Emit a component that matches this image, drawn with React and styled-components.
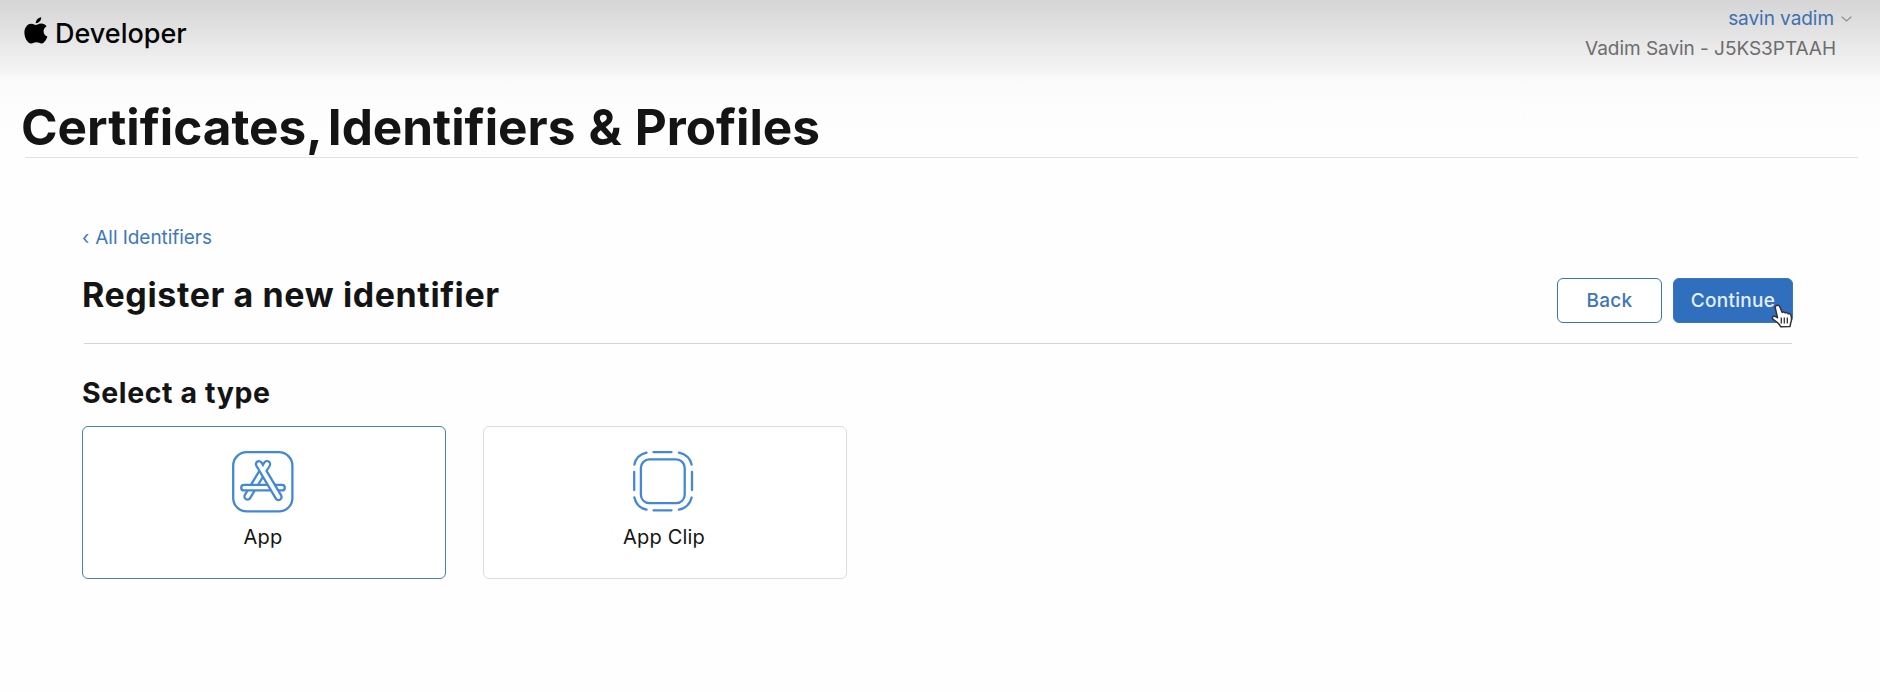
import React from "react";
import styled, { createGlobalStyle } from "styled-components";

const GlobalStyle = createGlobalStyle`
  * { box-sizing: border-box; }
  body { margin: 0; background: #fefefe; font-family: Inter, "Liberation Sans", sans-serif; color: #141414; }
  h1, h2, h3 { margin: 0; font-weight: 700; white-space: nowrap; }
  svg { display: block; flex: none; }
`;

const Page = styled.div`
  min-height: 692px;
  background: linear-gradient(
    #d4d4d6 0, #dadadb 12px, #e0e0e1 26px, #e9e9e9 45px, #f1f1f1 66px,
    #f4f4f4 72px, #fafafa 77px, #fdfdfd 105px, #fefefe 150px
  );
`;

const Header = styled.header`
  display: flex;
  justify-content: space-between;
  height: 75px;
  padding: 0 28px 0 24px;
`;

const Brand = styled.a`
  display: flex;
  align-items: flex-start;
  gap: 7px;
  padding-top: 16px;
  color: #050505;
  font-size: 27px;
  font-weight: 500;
  line-height: 35px;
`;

const Account = styled.div`
  display: flex;
  flex-direction: column;
  align-items: flex-end;
  gap: 6px;
  padding-top: 7px;
  font-size: 19px;
  line-height: 24px;
`;

const AccountName = styled.a`
  display: flex;
  align-items: center;
  gap: 7px;
  color: #3e70ae;
  letter-spacing: -0.05px;
`;

const Team = styled.span`
  margin-right: 16px;
  color: #6d6d6e;
  letter-spacing: -0.04px;
`;

const TitleBar = styled.div`
  margin: 0 22px 0 25px;
  padding-top: 22px;
  border-bottom: 1px solid #e2e2e2;
`;

const PageTitle = styled.h1`
  margin-left: -4px;
  font-size: 49.5px;
  line-height: 60px;
  letter-spacing: -0.02px;
  word-spacing: 1.3px;
`;

const LeadWord = styled.span`
  margin-right: -8px;
`;

const Content = styled.main`
  padding: 68px 87px 0 82px;
`;

const Breadcrumb = styled.a`
  display: flex;
  gap: 6px;
  color: #4078bd;
  font-size: 19px;
  line-height: 24px;
  letter-spacing: -0.05px;
`;

const SectionHead = styled.div`
  display: flex;
  justify-content: space-between;
  align-items: flex-start;
  height: 68px;
  margin-top: 25px;
`;

const SectionTitle = styled.h2`
  font-size: 34px;
  line-height: 40px;
  letter-spacing: 0.6px;
`;

const Actions = styled.div`
  display: flex;
  gap: 11px;
  padding-top: 3px;
`;

const Button = styled.button`
  width: ${(p) => (p.$primary ? 120 : 105)}px;
  height: 45px;
  padding: 0;
  border: 1px solid #3a76b8;
  border-radius: 6px;
  background: ${(p) => (p.$primary ? "#2f6fbd" : "#fff")};
  color: ${(p) => (p.$primary ? "#e3f0fc" : "#3c75b8")};
  font: 450 19px Inter, sans-serif;
  letter-spacing: 0.3px;
`;

const PrimarySlot = styled.div`
  position: relative;
`;

const Pointer = styled.svg`
  position: absolute;
  left: 96px;
  top: 25px;
`;

const Divider = styled.div`
  height: 1px;
  margin: 0 1px 0 2px;
  background: #d4d4d4;
`;

const GroupTitle = styled.h3`
  margin: 32px 0 16px;
  font-size: 28.5px;
  line-height: 34px;
  letter-spacing: 0.6px;
`;

const Cards = styled.div`
  display: flex;
  gap: 37px;
`;

const Card = styled.div`
  display: flex;
  flex-direction: column;
  align-items: center;
  gap: 11px;
  width: 364px;
  height: 153px;
  padding: 24px 2px 0 0;
  border: 1px solid ${(p) => (p.$selected ? "#4a80b4" : "#dcdcdc")};
  border-radius: 6px;
  background: #fff;
  font-size: 20px;
  line-height: 26px;
  letter-spacing: 0.2px;
`;

const AppleLogo = () => (
  <svg width="24" height="28" viewBox="0 -1 24 28" fill="#000">
    <path d="M17.2.2c.2 2.900-2.300 5.900-5.400 6C11.500 3.400 14.200.6 17.200.2z" />
    <path d="M12 8c1.200 0 2.700-1.400 5.200-1.400 2.300 0 4.100 1 5.300 2.600-4.300 2.700-3.700 8.600.9 10.400-.9 2.600-2.900 6.800-5.700 6.900-2 0-2.900-1.200-5.300-1.200-2.300 0-3.300 1.200-5.200 1.200C3.400 26.500.4 20.900.4 15.600c0-5.500 3.400-8.900 6.900-8.900 2.100 0 3.600 1.300 4.700 1.300z" />
  </svg>
);

const Chevron = () => (
  <svg width="11" height="6" viewBox="0 0 11 6" fill="none" stroke="#8d9299" strokeWidth="1.300">
    <path d="M.6.700 5.500 5 10.400.7" />
  </svg>
);

const AppIcon = () => (
  <svg width="62" height="62" viewBox="0 0 62 62" fill="none" strokeLinecap="round">
    <rect x="1.200" y="1.200" width="59.200" height="59.200" rx="13.500" stroke="#4388d8" strokeWidth="2.300" />
    <path d="M35 13.200 15.500 45.500" stroke="#4388d8" strokeWidth="8.400" />
    <path d="M35 13.200 15.500 45.500" stroke="#fff" strokeWidth="3.800" />
    <path d="M12 36.700H50" stroke="#4388d8" strokeWidth="7.800" />
    <path d="M12 36.700H50" stroke="#fff" strokeWidth="3.200" />
    <path d="M27 13.200 46.500 46" stroke="#4388d8" strokeWidth="8.400" />
    <path d="M27 13.200 46.500 46" stroke="#fff" strokeWidth="3.800" />
    <path d="M35 13.200 31.500 19" stroke="#fff" strokeWidth="3.800" />
  </svg>
);

const ClipIcon = () => (
  <svg width="62" height="62" viewBox="1 0.5 62 62" fill="none" stroke="#4388d8" strokeWidth="2.300">
    <rect x="8.900" y="8.900" width="43.800" height="43.800" rx="8.500" />
    <path
      strokeLinecap="round"
      d="M21.500 1.700h18M21.500 59.800h18M2.200 21.500v18M60 21.500v18M14.500 2.200C8 3.700 3.700 8 2.400 14M47 2.200C53.500 3.700 58.200 8 59.600 14M14.500 59.200C8 57.700 3.700 53.300 2.400 47M47 59.200c6.500-1.500 11.200-5.900 12.600-12.200"
    />
  </svg>
);

const HandPointer = () => (
  <Pointer width="26" height="28" viewBox="0 0 26 28">
    <path
      d="M7.500 2.500C9 1.700 10.300 2.600 10.900 4l2.300 5.400c1-.8 2.300-.5 2.900.5 1-.7 2.400-.3 2.900.8 1.400-.5 2.600.2 3 1.600.9 3.300.6 5.600-.3 7.700l-.7 3.500-9.200.3c-1.600-2.800-3.600-4.700-6.300-6.400-1.600-1-2.500-2.300-1.900-3.500.8-1.200 2.800-.7 4.900.8L6.400 5.300c-.5-1.300-.1-2.300 1.100-2.800z"
      fill="#fff"
      stroke="#333"
      strokeWidth="1.500"
      strokeLinejoin="round"
    />
    <path d="M12.300 14.500v6M15.300 14.500v6M18.300 14.500v6" stroke="#333" strokeWidth="1.300" />
  </Pointer>
);

export default function App() {
  return (
    <Page>
      <GlobalStyle />
      <Header>
        <Brand>
          <AppleLogo />
          <span>Developer</span>
        </Brand>
        <Account>
          <AccountName>
            savin vadim
            <Chevron />
          </AccountName>
          <Team>Vadim Savin - J5KS3PTAAH</Team>
        </Account>
      </Header>
      <TitleBar>
        <PageTitle>
          <LeadWord>Certificates,</LeadWord> Identifiers &amp; Profiles
        </PageTitle>
      </TitleBar>
      <Content>
        <Breadcrumb>
          <span>‹</span>
          <span>All Identifiers</span>
        </Breadcrumb>
        <SectionHead>
          <SectionTitle>Register a new identifier</SectionTitle>
          <Actions>
            <Button>Back</Button>
            <PrimarySlot>
              <Button $primary>Continue</Button>
              <HandPointer />
            </PrimarySlot>
          </Actions>
        </SectionHead>
        <Divider />
        <GroupTitle>Select a type</GroupTitle>
        <Cards>
          <Card $selected>
            <AppIcon />
            App
          </Card>
          <Card>
            <ClipIcon />
            App Clip
          </Card>
        </Cards>
      </Content>
    </Page>
  );
}
